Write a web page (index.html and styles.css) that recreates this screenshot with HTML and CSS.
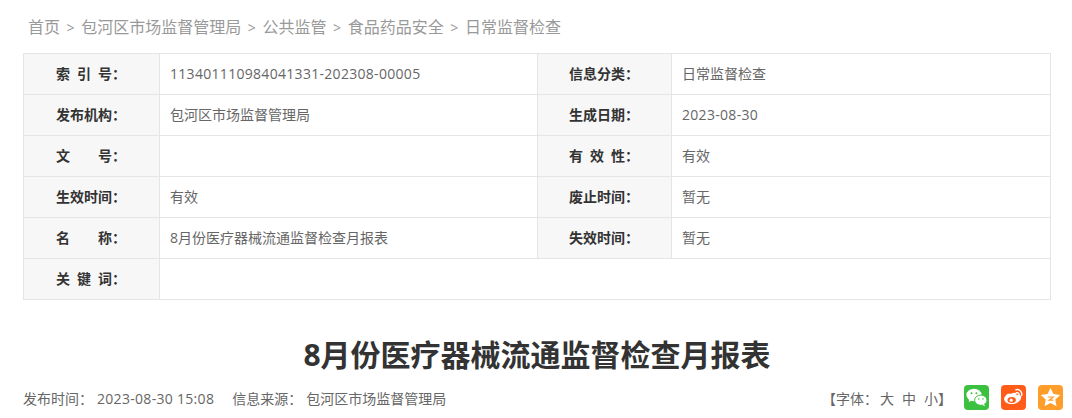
FILE: index.html
```html
<!DOCTYPE html>
<html lang="zh-CN">
<head>
<meta charset="utf-8">
<title>8月份医疗器械流通监督检查月报表</title>
<link rel="stylesheet" href="styles.css">
</head>
<body>
<div class="page">
  <nav class="crumbs">
    <a>首页</a><span class="sep">&gt;</span><a>包河区市场监督管理局</a><span class="sep">&gt;</span><a>公共监管</a><span class="sep">&gt;</span><a>食品药品安全</a><span class="sep">&gt;</span><a>日常监督检查</a>
  </nav>
  <table class="meta-table">
    <colgroup><col class="c1"><col class="c2"><col class="c3"><col class="c4"></colgroup>
    <tr><th><span class="l3">索 引 号：</span></th><td class="num">113401110984041331-202308-00005</td><th>信息分类：</th><td>日常监督检查</td></tr>
    <tr><th>发布机构：</th><td>包河区市场监督管理局</td><th>生成日期：</th><td class="num">2023-08-30</td></tr>
    <tr><th>文　　号：</th><td></td><th><span class="l3">有 效 性：</span></th><td>有效</td></tr>
    <tr><th>生效时间：</th><td>有效</td><th>废止时间：</th><td>暂无</td></tr>
    <tr><th>名　　称：</th><td>8月份医疗器械流通监督检查月报表</td><th>失效时间：</th><td>暂无</td></tr>
    <tr><th><span class="l3">关 键 词：</span></th><td colspan="3"></td></tr>
  </table>
  <h1 class="title">8月份医疗器械流通监督检查月报表</h1>
  <div class="info">
    <div class="info-left">
      <span><span class="key">发布时间：</span><span class="num">2023-08-30 15:08</span></span>
      <span><span class="key">信息来源：</span>包河区市场监督管理局</span>
    </div>
    <div class="info-right">
      <div class="size">【字体：<a>大</a><a>中</a><a>小</a>】</div>
      <a class="share wechat" aria-label="微信">
        <svg viewBox="0 0 25 25" width="25" height="25"><ellipse cx="10" cy="10" rx="7.6" ry="6.2" fill="#fff"/><path d="M5.5 14l-.8 3 3.2-1.6z" fill="#fff"/><ellipse cx="16.8" cy="15.200" rx="6.200" ry="5.100" fill="#fff" stroke="#3bc03f" stroke-width="1"/><path d="M20 19l1.200 2.200-3.400-1.400z" fill="#fff"/><circle cx="7.500" cy="8.300" r="1" fill="#3bc03f"/><circle cx="12.400" cy="8.300" r="1" fill="#3bc03f"/><circle cx="14.800" cy="14" r=".8" fill="#3bc03f"/><circle cx="18.900" cy="14" r=".8" fill="#3bc03f"/></svg>
      </a>
      <a class="share weibo" aria-label="微博">
        <svg viewBox="0 0 25 25" width="25" height="25"><path d="M10 8.800c2.900-1.600 5.300-1.500 5.600.4.100.7-.1 1.200.5 1 2.400-.6 4.200.4 4.100 2.300-.2 3.700-5.200 6.600-9.600 6.600-3.900 0-7.500-1.900-7.500-5 0-1.900 1.800-4.100 3.700-5.300z" fill="#fff"/><ellipse cx="10.700" cy="15" rx="4.200" ry="3" fill="#ff5c19"/><circle cx="10.200" cy="15.200" r="1.600" fill="#fff"/><path d="M15 4.800c3.600-.9 6.500 2.100 5.600 5.600M15.500 7.700c1.600-.3 2.800 1 2.500 2.500" fill="none" stroke="#fff" stroke-width="1.500" stroke-linecap="round"/></svg>
      </a>
      <a class="share qzone" aria-label="QQ空间">
        <svg viewBox="0 0 25 25" width="25" height="25"><path d="M12.500 3l3 6.100 6.700.9-4.900 4.600 1.200 6.600-6-3.200-6 3.200 1.200-6.600L2.800 10l6.700-.9z" fill="#fff"/><path d="M9.800 12h5.400l-4 3.200h4.200" fill="none" stroke="#ff9d2a" stroke-width="1.200"/></svg>
      </a>
    </div>
  </div>
</div>
</body>
</html>
```
FILE: styles.css
```css
* { box-sizing: border-box; }
html, body { margin: 0; padding: 0; background: #fff; }
body {
  font-family: "Open Sans", "Noto Sans CJK SC", sans-serif;
  font-size: 14px;
  color: #666;
  height: 418px;
  overflow: hidden;
}
.page { padding: 0 9px 0 23px; }
.crumbs {
  height: 53px;
  padding: 15px 0 0 5px;
  font-size: 16px;
  line-height: 24px;
  color: #999;
  white-space: nowrap;
}
.sep { margin: 0 6.6px; font-size: 14px; }
.num { letter-spacing: .3px; }
.meta-table {
  width: 1027px;
  border-collapse: collapse;
  table-layout: fixed;
  font-size: 14px;
}
.c1 { width: 136px; }
.c2 { width: 378px; }
.c3 { width: 134px; }
.c4 { width: 379px; }
.meta-table tr { height: 41px; }
.meta-table th, .meta-table td {
  border: 1px solid #e5e5e5;
  padding: 0;
  line-height: 20px;
}
.meta-table th {
  padding-right: 1px;
  background: #f7f7f7;
  color: #333;
  font-weight: bold;
  text-align: center;
  white-space: pre;
}
.meta-table td { padding-left: 10px; color: #666; }
.l3 { word-spacing: 3.4px; }
.title {
  width: 1028px;
  margin: 0;
  padding-top: 35px;
  font-size: 30px;
  line-height: 40px;
  font-weight: bold;
  color: #333;
  text-align: center;
}
.info {
  display: flex;
  justify-content: space-between;
  align-items: center;
  height: 30px;
  margin-top: 7px;
}
.info-left { display: flex; gap: 18px; white-space: nowrap; padding-top: 2px; }
.key { margin-right: 4px; }
.info-right { display: flex; align-items: center; gap: 12px; }
.size { padding-top: 2px; }
.size a { margin-left: 8px; }
.size a:first-of-type { margin-left: 2px; }
.share {
  display: block;
  width: 25px;
  height: 25px;
  border-radius: 4px;
  overflow: hidden;
}
.share svg { display: block; }
.wechat { background: #3bc03f; }
.weibo { background: #ff5c19; }
.qzone { background: #ff9d2a; }
```
